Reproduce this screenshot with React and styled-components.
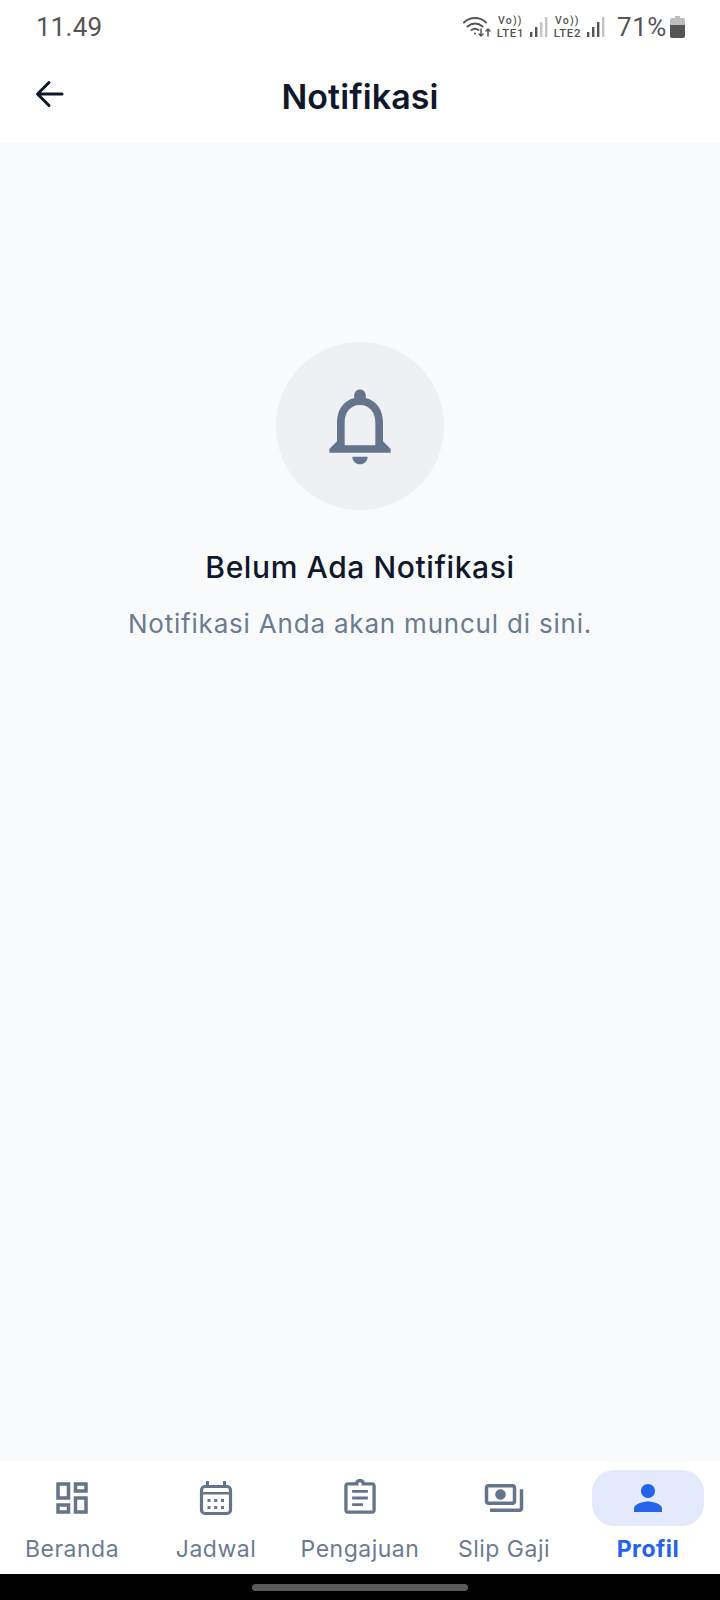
import styled, { createGlobalStyle } from 'styled-components'

const Global = createGlobalStyle`
  html, body { margin: 0; padding: 0; background: #fff; }
  * { box-sizing: border-box; }
`

const Screen = styled.div`
  width: 720px;
  height: 1600px;
  display: flex;
  flex-direction: column;
  font-family: Inter, "Noto Sans", sans-serif;
  background: #f8fafc;
  overflow: hidden;
`

const Top = styled.header`
  height: 143px;
  background: #fff;
  display: flex;
  flex-direction: column;
`

const StatusBar = styled.div`
  height: 50px;
  display: flex;
  align-items: center;
  justify-content: space-between;
  padding: 3px 35px 0 36px;
  color: #555;
`

const Clock = styled.span`
  font-family: Roboto, sans-serif;
  font-size: 26px;
  letter-spacing: 0.2px;
`

const StatusIcons = styled.div`
  display: flex;
  align-items: center;
  gap: 5px;
`

const SimTag = styled.div`
  width: 27px;
  display: flex;
  flex-direction: column;
  align-items: center;
  font-family: Roboto, sans-serif;
  font-weight: 500;
  color: #555;
`

const SimLine = styled.span`
  font-size: ${(p) => (p.$small ? 10.5 : 11.5)}px;
  line-height: 12px;
  letter-spacing: ${(p) => (p.$small ? 1.2 : 0.6)}px;
  white-space: nowrap;
`

const Percent = styled.span`
  font-family: Roboto, sans-serif;
  font-size: 26px;
  letter-spacing: 0.6px;
  margin: 0 -2px 0 6px;
`

const AppBar = styled.div`
  flex: 1;
  position: relative;
  display: flex;
  align-items: center;
  justify-content: center;
  padding-top: 1px;
`

const BackButton = styled.button`
  position: absolute;
  left: 32px;
  top: 26px;
  width: 36px;
  height: 36px;
  padding: 0;
  border: 0;
  background: none;
  color: #0f172a;
`

const Title = styled.h1`
  margin: 0;
  font-size: 34px;
  line-height: 40px;
  font-weight: 600;
  letter-spacing: 0.1px;
  color: #0f172a;
`

const Content = styled.main`
  flex: 1;
  display: flex;
  flex-direction: column;
  align-items: center;
  padding-top: 199px;
`

const BellCircle = styled.div`
  width: 168px;
  height: 168px;
  border-radius: 50%;
  background: #eef0f3;
  color: #64748b;
  display: flex;
  align-items: center;
  justify-content: center;
`

const EmptyTitle = styled.h2`
  margin: 37px 0 0;
  font-size: 30px;
  line-height: 40px;
  font-weight: 500;
  letter-spacing: 0.6px;
  color: #0f172a;
`

const EmptyText = styled.p`
  margin: 19px 0 0;
  font-size: 26px;
  line-height: 36px;
  letter-spacing: 0.8px;
  color: #6b7b91;
`

const Nav = styled.nav`
  height: 112px;
  background: #fff;
  display: grid;
  grid-template-columns: repeat(5, 1fr);
`

const NavItem = styled.div`
  display: flex;
  flex-direction: column;
  align-items: center;
  padding-top: 8px;
  color: ${(p) => (p.$active ? '#2563eb' : '#64748b')};
`

const IconWrap = styled.div`
  width: 112px;
  height: 56px;
  border-radius: 22px;
  display: flex;
  align-items: center;
  justify-content: center;
  background: ${(p) => (p.$active ? '#e3eafc' : 'transparent')};
`

const NavLabel = styled.span`
  margin-top: 7px;
  font-size: 23px;
  line-height: 32px;
  letter-spacing: 0.5px;
  font-weight: ${(p) => (p.$active ? 700 : 400)};
  color: ${(p) => (p.$active ? '#2563eb' : '#6b7b91')};
`

const GestureBar = styled.div`
  height: 26px;
  background: #000;
  display: flex;
  align-items: center;
  justify-content: center;
`

const GesturePill = styled.div`
  width: 216px;
  height: 7px;
  border-radius: 4px;
  background: #5a5a5a;
`

const MatIcon = ({ d, size = 42 }) => (
  <svg width={size} height={size} viewBox="0 0 24 24" fill="currentColor">
    <path d={d} />
  </svg>
)

const CalendarIcon = () => (
  <svg width="42" height="42" viewBox="0 0 42 42" fill="currentColor">
    <rect x="6.5" y="9.5" width="29" height="27" rx="3.5" fill="none" stroke="currentColor" strokeWidth="3.2" />
    <path d="M11 4h3v6h-3zM28 4h3v6h-3zM6 15h30v2.6H6z" />
    {[12.5, 19.2, 26].map((x) =>
      [22, 29].map((y) => <rect key={`${x}-${y}`} x={x} y={y} width="3" height="3" />),
    )}
  </svg>
)

const icons = {
  dashboard:
    'M19 5v2h-4V5h4M9 5v6H5V5h4m10 8v6h-4v-6h4M9 17v2H5v-2h4M21 3h-8v6h8V3zM11 3H3v10h8V3zm10 8h-8v10h8V11zm-10 4H3v6h8v-6z',
  assignment:
    'M19 3h-4.18C14.4 1.84 13.3 1 12 1c-1.3 0-2.4.84-2.82 2H5c-1.1 0-2 .9-2 2v14c0 1.1.9 2 2 2h14c1.1 0 2-.9 2-2V5c0-1.1-.9-2-2-2zm-7 0c.55 0 1 .45 1 1s-.45 1-1 1-1-.45-1-1 .45-1 1-1zm7 16.1H4.9V4.9h14.2v14.2zM7.5 7.4h9v1.6h-9zm0 3.8h9v1.6h-9zm0 3.8h6.2v1.6H7.5z',
  payments:
    'M19 14V6c0-1.1-.9-2-2-2H3c-1.1 0-2 .9-2 2v8c0 1.1.9 2 2 2h14c1.1 0 2-.9 2-2zm-2 0H3V6h14v8zm-7-7c-1.66 0-3 1.34-3 3s1.34 3 3 3 3-1.34 3-3-1.34-3-3-3zm13 0v11c0 1.1-.9 2-2 2H4v-2h17V7h2z',
  person:
    'M12 12c2.21 0 4-1.79 4-4s-1.79-4-4-4-4 1.79-4 4 1.79 4 4 4zm0 2c-2.67 0-8 1.34-8 4v2h16v-2c0-2.66-5.33-4-8-4z',
  bell:
    'M12 22c1.1 0 2-.9 2-2h-4c0 1.1.9 2 2 2zm6-6v-5c0-3.07-1.63-5.64-4.5-6.32V4c0-.83-.67-1.5-1.5-1.5s-1.5.67-1.5 1.5v.68C7.64 5.36 6 7.92 6 11v5l-2 2v1h16v-1l-2-2zm-2 1H8v-6c0-2.48 1.51-4.5 4-4.5s4 2.02 4 4.5v6z',
}

const navItems = [
  { label: 'Beranda', icon: <MatIcon d={icons.dashboard} /> },
  { label: 'Jadwal', icon: <CalendarIcon /> },
  { label: 'Pengajuan', icon: <MatIcon d={icons.assignment} /> },
  { label: 'Slip Gaji', icon: <MatIcon d={icons.payments} /> },
  { label: 'Profil', icon: <MatIcon d={icons.person} />, active: true },
]

const Wifi = () => (
  <svg width="30" height="24" viewBox="0 0 30 24" fill="none" stroke="#555" strokeWidth="2" strokeLinecap="round">
    <path d="M2 7.5C8 1.5 18 1.5 24 7.5" />
    <path d="M5.5 11.5C10 7.5 16 7.5 20.5 11.5" />
    <path d="M9.5 15C11.5 13.5 14.5 13.5 16.5 15" />
    <circle cx="13" cy="18.5" r="1" fill="#555" stroke="none" />
    <path d="M19 14v7M17 19l2 2 2-2M26 21v-7M24 16l2-2 2 2" strokeWidth="1.5" />
  </svg>
)

const Signal = ({ level }) => (
  <svg width="20" height="22" viewBox="0 0 20 22">
    {[0, 1, 2, 3].map((i) => (
      <rect
        key={i}
        x={1 + i * 5}
        y={16 - i * 5}
        width="2.4"
        height={5 + i * 5}
        fill={i < level ? '#555' : '#c4c4c4'}
      />
    ))}
  </svg>
)

const Battery = () => (
  <svg width="15" height="24" viewBox="0 0 15 24">
    <path d="M5 1h5v2h3a2 2 0 0 1 2 2v6H0V5a2 2 0 0 1 2-2h3z" fill="#bdbdbd" />
    <path d="M0 10h15v11a2 2 0 0 1-2 2H2a2 2 0 0 1-2-2z" fill="#555" />
  </svg>
)

const Sim = ({ n }) => (
  <SimTag>
    <SimLine $small>Vo))</SimLine>
    <SimLine>LTE{n}</SimLine>
  </SimTag>
)

export default function App() {
  return (
    <>
      <Global />
      <Screen>
        <Top>
          <StatusBar>
            <Clock>11.49</Clock>
            <StatusIcons>
              <Wifi />
              <Sim n={1} />
              <Signal level={2} />
              <Sim n={2} />
              <Signal level={3} />
              <Percent>71%</Percent>
              <Battery />
            </StatusIcons>
          </StatusBar>
          <AppBar>
            <BackButton aria-label="Kembali">
              <svg width="36" height="36" viewBox="0 0 36 36" fill="none" stroke="currentColor" strokeWidth="3" strokeLinecap="round" strokeLinejoin="round">
                <path d="M30 18H6M17 6.5 5.5 18 17 29.5" />
              </svg>
            </BackButton>
            <Title>Notifikasi</Title>
          </AppBar>
        </Top>
        <Content>
          <BellCircle>
            <MatIcon d={icons.bell} size={92} />
          </BellCircle>
          <EmptyTitle>Belum Ada Notifikasi</EmptyTitle>
          <EmptyText>Notifikasi Anda akan muncul di sini.</EmptyText>
        </Content>
        <Nav>
          {navItems.map((item) => (
            <NavItem key={item.label} $active={item.active}>
              <IconWrap $active={item.active}>{item.icon}</IconWrap>
              <NavLabel $active={item.active}>{item.label}</NavLabel>
            </NavItem>
          ))}
        </Nav>
        <GestureBar>
          <GesturePill />
        </GestureBar>
      </Screen>
    </>
  )
}
